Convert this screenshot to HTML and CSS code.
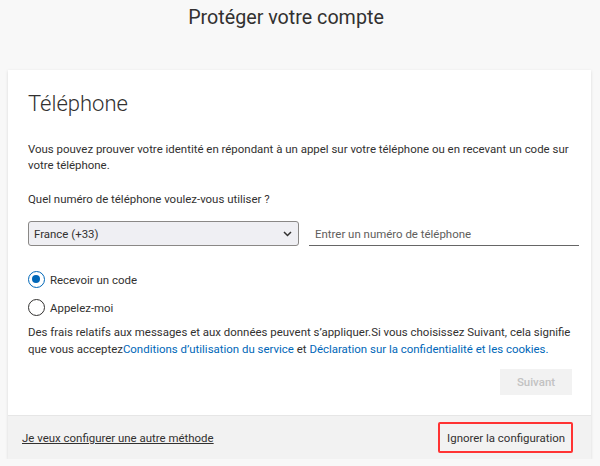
FILE: index.html
```html
<!DOCTYPE html>
<html lang="fr">
<head>
<meta charset="utf-8">
<title>Protéger votre compte</title>
<link rel="stylesheet" href="styles.css">
</head>
<body>
<h1 class="page-title">Protéger votre compte</h1>
<div class="card">
  <div class="card-body">
    <h2 class="section-title">Téléphone</h2>
    <p class="intro">Vous pouvez prouver votre identité en répondant à un appel sur votre téléphone ou en recevant un code sur votre téléphone.</p>
    <p class="question">Quel numéro de téléphone voulez-vous utiliser ?</p>
    <div class="phone-row">
      <div class="select">
        <span>France (+33)</span>
        <svg class="chev" width="9" height="6" viewBox="0 0 9 6"><path d="M1 1l3.5 3.5L8 1" fill="none" stroke="#323130" stroke-width="1.5"/></svg>
      </div>
      <div class="phone-input">Entrer un numéro de téléphone</div>
    </div>
    <div class="radios">
      <label class="radio"><span class="dot checked"></span>Recevoir un code</label>
      <label class="radio"><span class="dot"></span>Appelez-moi</label>
    </div>
    <p class="legal">Des frais relatifs aux messages et aux données peuvent s’appliquer.Si vous choisissez Suivant, cela signifie que vous acceptez<a href="#">Conditions d’utilisation du service</a> et <a href="#">Déclaration sur la confidentialité et les cookies.</a></p>
    <div class="actions">
      <button class="next" disabled>Suivant</button>
    </div>
  </div>
  <div class="card-footer">
    <a class="other" href="#">Je veux configurer une autre méthode</a>
    <span class="skip">Ignorer la configuration</span>
  </div>
</div>
</body>
</html>
```
FILE: styles.css
```css
* { box-sizing: border-box; }
body {
  margin: 0;
  background: #f8f8f8;
  font-family: Roboto, "Liberation Sans", sans-serif;
  color: #323130;
}
.page-title {
  margin: 0;
  padding: 3px 28px 0 0;
  height: 70px;
  font-size: 19.7px;
  line-height: 30px;
  font-weight: 400;
  text-align: center;
  color: #323130;
}
.card {
  margin: 0 9px 0 8px;
  background: #fff;
  box-shadow: 0 1px 3px rgba(0,0,0,0.13);
}
.card-body {
  padding: 19px 12px 20px 20px;
}
.section-title {
  margin: 0;
  font-size: 22px;
  line-height: 30px;
  font-weight: 300;
  color: #323130;
}
.intro {
  margin: 22px 0 0;
  font-size: 11.45px;
  line-height: 16px;
}
.question {
  margin: 18px 0 0;
  font-size: 11.45px;
  line-height: 16px;
}
.phone-row {
  display: flex;
  gap: 10px;
  margin-top: 14px;
  align-items: flex-start;
}
.select {
  width: 271px;
  height: 25px;
  border: 1px solid #8a8886;
  border-radius: 3px;
  background: #efeff3;
  display: flex;
  align-items: center;
  justify-content: space-between;
  padding: 0 6px 0 5px;
  font-size: 11.45px;
}
.phone-input {
  flex: 0 0 270px;
  height: 25px;
  border-bottom: 1.5px solid #666;
  padding: 5px 0 0 6px;
  font-size: 11.45px;
  line-height: 16px;
  color: #605e5c;
}
.radios {
  margin-top: 25px;
  display: flex;
  flex-direction: column;
  gap: 11px;
}
.radio {
  display: flex;
  align-items: center;
  gap: 5px;
  font-size: 11.45px;
  line-height: 16px;
}
.dot {
  flex: 0 0 17px;
  width: 17px;
  height: 17px;
  border-radius: 50%;
  border: 1px solid #323130;
  position: relative;
}
.dot.checked {
  border: 1.5px solid #0067b8;
}
.dot.checked::after {
  content: "";
  position: absolute;
  left: 3px; top: 3px;
  width: 8px; height: 8px;
  border-radius: 50%;
  background: #0067b8;
}
.legal {
  margin: 8px 0 0;
  font-size: 11.45px;
  line-height: 17px;
}
.legal a {
  color: #0067b8;
  text-decoration: none;
}
.actions {
  display: flex;
  justify-content: flex-end;
  margin-top: 11px;
  padding-right: 7px;
}
.next {
  width: 72px;
  height: 26px;
  border: none;
  background: #f2f2f2;
  color: #c2c2c2;
  font-family: inherit;
  font-size: 11.45px;
  font-weight: 500;
}
.card-footer {
  height: 44px;
  background: #f2f2f2;
  border-top: 1px solid #e6e6e6;
  display: flex;
  justify-content: space-between;
  align-items: center;
  padding: 0 18px 0 14px;
}
.other {
  font-size: 11.45px;
  color: #323130;
  text-decoration: underline;
}
.skip {
  font-size: 11.45px;
  line-height: 16px;
  padding: 5.5px 6px 5.5px 7px;
  border: 2px solid #f33;
  border-radius: 2px;
}
```
